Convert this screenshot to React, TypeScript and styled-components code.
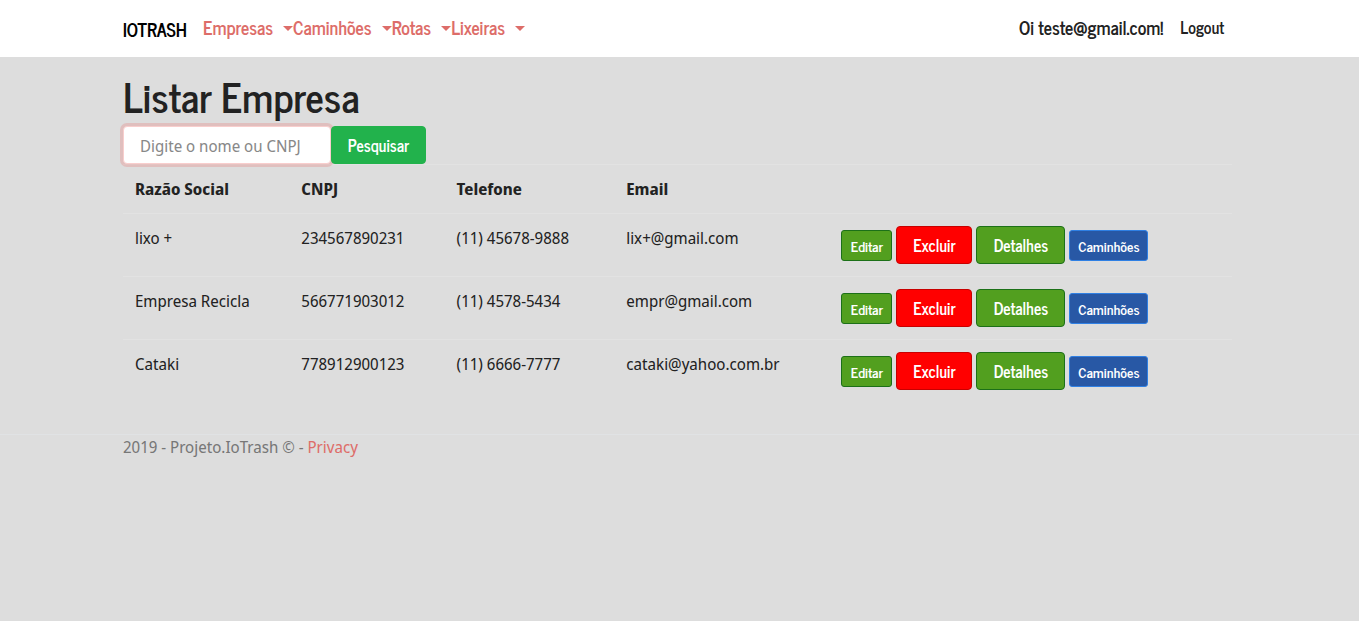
import React from "react";
import styled, { createGlobalStyle } from "styled-components";

const heading = `"News Cycle", "Roboto Condensed", "Arial Narrow", sans-serif`;

const GlobalStyle = createGlobalStyle`
  * { box-sizing: border-box; }
  body {
    margin: 0;
    background: #ddd;
    color: #222;
    font: 400 16px/24px "Noto Sans Display", "Open Sans", sans-serif;
  }
`;

const Container = styled.div`
  width: 100%;
  max-width: 1139px;
  margin: 0 auto;
  padding: 0 17px 0 13px;
`;

const Header = styled.header`
  background: #fff;
`;

const Nav = styled.nav`
  display: flex;
  align-items: center;
  height: 57px;
  font: 700 18px/24px ${heading};
`;

const Brand = styled.a`
  margin-right: 16px;
  color: #000;
  text-decoration: none;
`;

const Menu = styled.ul`
  display: flex;
  flex: 1;
  margin: 0;
  padding: 0 0 4px;
  list-style: none;
`;

const MenuButton = styled.button`
  display: flex;
  align-items: center;
  gap: 10px;
  padding: 0;
  border: 0;
  background: none;
  color: #dd6d69;
  font: inherit;

  &::after {
    content: "";
    margin-top: 3px;
    border: 5px solid transparent;
    border-top-color: currentColor;
    border-bottom: 0;
  }
`;

const Account = styled.div`
  display: flex;
  align-items: center;
  gap: 17px;
  padding: 0 8px 4px 0;
`;

const AccountLink = styled.a<{ $small?: boolean }>`
  color: #222;
  font-size: ${(p) => (p.$small ? 16 : 18)}px;
  text-decoration: none;
`;

const Title = styled.h1`
  margin: 0;
  padding: 17px 0 8px;
  font: 700 40px/44px ${heading};
`;

const Search = styled.form`
  display: flex;
`;

const SearchInput = styled.input`
  width: 208px;
  height: 38px;
  padding: 2px 16px 0;
  border: 1px solid #f8cecd;
  border-radius: 4px;
  outline: 0;
  background: #fff;
  box-shadow: 0 0 0 3px rgba(235, 104, 100, 0.25);
  color: #222;
  font: inherit;

  &::placeholder {
    color: #888;
    opacity: 1;
  }
`;

const Button = styled.button<{ $bg: string; $border: string; $width: number; $small?: boolean }>`
  width: ${(p) => p.$width}px;
  height: ${(p) => (p.$small ? 31 : 38)}px;
  padding: ${(p) => (p.$small ? 2 : 0)}px 0 0;
  border: 1px solid ${(p) => p.$border};
  border-radius: ${(p) => (p.$small ? 3 : 4)}px;
  background: ${(p) => p.$bg};
  color: #fff;
  font: 700 ${(p) => (p.$small ? 14 : 16)}px/24px ${heading};
`;

const Table = styled.table`
  width: 100%;
  border-collapse: collapse;
  table-layout: fixed;
`;

const Cell = styled.td`
  padding: 12px;
  border-top: 1px solid #e2e2e2;
  text-align: left;
  vertical-align: top;
`;

const Actions = styled.div`
  display: flex;
  align-items: baseline;
  gap: 4px;
`;

const Footer = styled.footer`
  margin-top: 32px;
  border-top: 1px solid #e0e2e4;
  color: #777;
`;

const PrivacyLink = styled.a`
  color: #dd6d69;
  text-decoration: none;
`;

const menus = ["Empresas", "Caminhões", "Rotas", "Lixeiras"];
const columns = [
  { title: "Razão Social", width: "15%" },
  { title: "CNPJ", width: "14%" },
  { title: "Telefone", width: "15.3%" },
  { title: "Email", width: "19.4%" },
  { title: "", width: "36.3%" },
];
const companies = [
  ["lixo +", "234567890231", "(11) 45678-9888", "lix+@gmail.com"],
  ["Empresa Recicla", "566771903012", "(11) 4578-5434", "empr@gmail.com"],
  ["Cataki", "778912900123", "(11) 6666-7777", "cataki@yahoo.com.br"],
];

export default function App() {
  return (
    <>
      <GlobalStyle />
      <Header>
        <Container>
          <Nav>
            <Brand href="#">IOTRASH</Brand>
            <Menu>
              {menus.map((name) => (
                <li key={name}>
                  <MenuButton type="button">{name}</MenuButton>
                </li>
              ))}
            </Menu>
            <Account>
              <AccountLink href="#">Oi teste@gmail.com!</AccountLink>
              <AccountLink href="#" $small>Logout</AccountLink>
            </Account>
          </Nav>
        </Container>
      </Header>
      <Container as="main">
        <Title>Listar Empresa</Title>
        <Search onSubmit={(e) => e.preventDefault()}>
          <SearchInput aria-label="Nome ou CNPJ" placeholder="Digite o nome ou CNPJ" />
          <Button type="submit" $bg="#22b24c" $border="#22b24c" $width={95}>Pesquisar</Button>
        </Search>
        <Table>
          <colgroup>
            {columns.map((c) => <col key={c.title} style={{ width: c.width }} />)}
          </colgroup>
          <thead>
            <tr>
              {columns.map((c) => <Cell as="th" key={c.title}>{c.title}</Cell>)}
            </tr>
          </thead>
          <tbody>
            {companies.map((row) => (
              <tr key={row[1]}>
                {row.map((value) => <Cell key={value}>{value}</Cell>)}
                <Cell>
                  <Actions>
                    <Button type="button" $small $bg="#529f1f" $border="#1c7018" $width={51}>Editar</Button>
                    <Button type="button" $bg="#ff0000" $border="#c80000" $width={76}>Excluir</Button>
                    <Button type="button" $bg="#529f1f" $border="#1c7018" $width={89}>Detalhes</Button>
                    <Button type="button" $small $bg="#2858a5" $border="#2f80e4" $width={79}>Caminhões</Button>
                  </Actions>
                </Cell>
              </tr>
            ))}
          </tbody>
        </Table>
      </Container>
      <Footer>
        <Container>
          2019 - Projeto.IoTrash © - <PrivacyLink href="#">Privacy</PrivacyLink>
        </Container>
      </Footer>
    </>
  );
}
